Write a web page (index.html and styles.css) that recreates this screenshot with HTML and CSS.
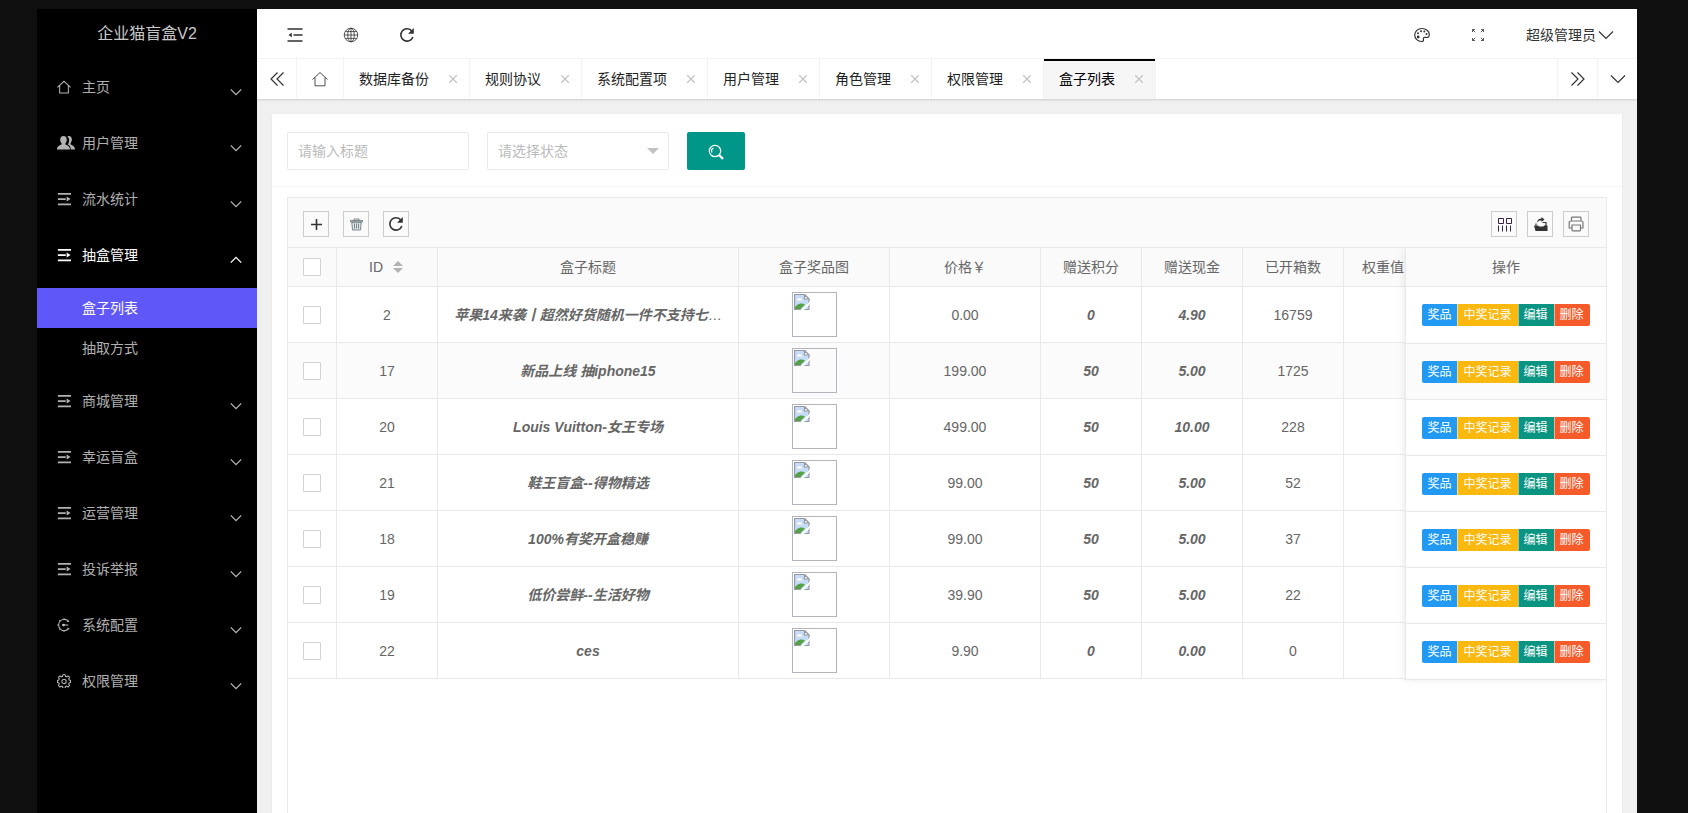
FILE: index.html
```html
<!DOCTYPE html>
<html lang="zh-CN">
<head>
<meta charset="UTF-8">
<meta name="viewport" content="width=device-width, initial-scale=1.0">
<title>盒子列表</title>
<link rel="stylesheet" href="styles.css">
</head>
<body>

<!-- 图标 -->
<svg class="sprite" aria-hidden="true">
<symbol id="i-home" viewBox="0 0 16 16"><path d="M.5 8.500 8 1.500l7.500 7M3 6.500v8.300h10V6.500"/></symbol>
<symbol id="i-user" viewBox="0 0 18 16"><path class="fill" d="M6.500 1c2.200 0 3.300 1.600 3.300 3.700 0 1.600-.6 2.800-1.400 3.600v1.300c2.400.9 4.600 1.900 4.600 4.900H0c0-3 2.200-4 4.600-4.900V8.300C3.800 7.500 3.200 6.300 3.200 4.700 3.200 2.600 4.300 1 6.500 1z"/><path class="fill" d="M10.300 1.500c.4-.3.900-.5 1.500-.5 2.100 0 3.100 1.600 3.100 3.600 0 1.600-.6 2.700-1.300 3.500v1.300c2.200.9 4.400 1.800 4.400 5.100h-4.200c0-2.700-1.300-4-3-4.900.8-1.300 1.300-2.900 1.300-4.700 0-1.300-.7-2.500-1.800-3.400z"/></symbol>
<symbol id="i-list" viewBox="0 0 16 16"><path stroke-width="2" d="M1 2h15M1 8h9M1 14h15"/><path class="fill" d="M11 5.200 15.500 8 11 10.800z"/></symbol>
<symbol id="i-conf" viewBox="0 0 16 16"><path d="M13.800 4.500A6.500 6.500 0 1 0 13.800 11.500M6 8h7M8 .2v2M8 13.800v2M.2 8h2M13 2.500l-1.500 1.600M2.600 2.600 4 4M2.600 13.400 4 12M13 13.500l-1.500-1.600"/><circle class="fill" cx="7.500" cy="8" r="1.500"/></symbol>
<symbol id="i-gear" viewBox="0 0 16 16"><path d="M6.700.8h2.600l.4 1.900 1.300.5 1.600-1.100 1.800 1.800-1 1.700.5 1.200 1.500.4v2.500l-1.500.4-.5 1.300 1 1.600-1.800 1.900-1.600-1.100-1.300.5-.4 1.900H6.700l-.4-1.900-1.300-.5-1.600 1.100L1.600 13l1-1.600-.5-1.300-1.500-.4V7.200l1.500-.4.5-1.200-1-1.700 1.800-1.800L5 3.200l1.300-.5z"/><circle cx="8" cy="8.500" r="2.500"/></symbol>
<symbol id="i-down" viewBox="0 0 16 16"><path d="M1 4.500 8 11.500l7-7"/></symbol>
<symbol id="i-up" viewBox="0 0 16 16"><path d="M1 11.500 8 4.500l7 7"/></symbol>
<symbol id="i-fold" viewBox="0 0 16 16"><path class="bold" d="M.5 2h15M6.500 8h9M.5 14h15"/><path class="fill" d="M1.500 8 4.800 5.800v4.400z"/></symbol>
<symbol id="i-globe" viewBox="0 0 16 16"><circle cx="8" cy="8" r="6.800"/><ellipse cx="8" cy="8" rx="3.300" ry="6.800"/><path d="M8 1v14M1 8h14M2.200 4.600h11.600M2.200 11.400h11.600"/></symbol>
<symbol id="i-refresh" viewBox="0 0 16 16"><path class="bold" d="M13 4.200A6.200 6.200 0 1 0 13.900 10"/><path class="fill" d="M14.800 1v5.800H9z"/></symbol>
<symbol id="i-skin" viewBox="0 0 16 16"><path d="M8 1.500c4 0 7.300 2.700 7.300 6 0 2.300-1.300 3.300-3.200 2.900-1.900-.4-3.100.3-2.700 1.900.3 1.300-.2 2.200-1.700 2.200C3.700 14.500.7 11.600.7 8S4 1.500 8 1.500z"/><circle class="fill" cx="4" cy="6.200" r="1"/><circle class="fill" cx="7" cy="4.200" r="1"/><circle class="fill" cx="10.300" cy="4.600" r="1"/><circle class="fill" cx="12.500" cy="7" r="1"/><circle class="fill" cx="4.200" cy="10" r="1.400"/></symbol>
<symbol id="i-full" viewBox="0 0 16 16"><path d="M5.200 5.200 2.500 2.500m0 2.500V2.500H5M10.800 5.200l2.700-2.700m-2.500 0h2.500V5M5.200 10.800l-2.700 2.700m0-2.500v2.500H5M10.800 10.800l2.700 2.700m-2.500 0h2.500V11"/></symbol>
<symbol id="i-left2" viewBox="0 0 16 16"><path d="M8.500 1.500 2 8l6.500 6.500M14.500 1.500 8 8l6.500 6.500"/></symbol>
<symbol id="i-right2" viewBox="0 0 16 16"><path d="M1.500 1.500 8 8l-6.500 6.500M7.500 1.500 14 8l-6.500 6.500"/></symbol>
<symbol id="i-close" viewBox="0 0 16 16"><path d="M3 3l10 10M13 3 3 13"/></symbol>
<symbol id="i-search" viewBox="0 0 16 16"><circle cx="7" cy="7" r="5.700"/><path d="M4 8.500A3.400 3.400 0 0 1 5.500 4"/><path stroke-width="2.400" d="M11.200 11.200 15 15"/></symbol>
<symbol id="i-plus" viewBox="0 0 16 16"><path class="bold" d="M8.500 3v11M3 8.500h11"/></symbol>
<symbol id="i-trash" viewBox="0 0 16 16"><path fill="#dfe6e8" d="M3.800 6h9.400l-.7 8H4.500z"/><path d="M2.500 4.500h12v1.500h-12zM6 4.300V3h5v1.300M6.500 7.500v5M8.500 7.500v5M10.500 7.500v5"/></symbol>
<symbol id="i-cols" viewBox="0 0 16 16"><path d="M2.500 2.500h5v5h-5zM10.500 2.500h5v5h-5zM2.500 9.500v6M6.500 9.500v6M10.500 9.500v6M14.500 9.500v6"/></symbol>
<symbol id="i-export" viewBox="0 0 16 16"><path class="fill" d="M2 9.500h4l1 1h4.500l.5-1h3.500V15h-12zM9.500 1l3 2.500-3 2.500V4.600C7.500 4.500 6 5 5 7c0-3 1.800-4.400 4.500-4.500z"/><path d="M10.500 6.500h3.500v3.500M4 9.500v-2"/></symbol>
<symbol id="i-print" viewBox="0 0 16 16"><path d="M3.500 5V2q0-.8.800-.8h7.900q.8 0 .8.800v3M3.500 12H1.200V7q0-2 2-2h9.800q2 0 2 2v5h-2.300M4 9h8.500v5q0 .8-.8.800H4.800q-.8 0-.8-.8z"/></symbol>
<symbol id="i-broken" viewBox="0 0 16 16"><path fill="#c6dbf5" stroke="#9a9aa6" d="M.5.500h10l4.500 4.500v10.500H.5z"/><path fill="#fff" stroke="#9a9aa6" d="M10.500.5V5H15z"/><path fill="#fff" d="M2.500 6.500q.3-2 2-2 .8-1.300 2-.3 1.500.3 1.500 2.300z"/><path fill="#54a147" d="M1 15v-2q3-4 6-3.500 2.500 0 4 1l-4.500 4.500z"/><path fill="#fff" d="M16 7.500V10l-6 6H6.500z"/></symbol>
</svg>

<div class="layout">

<nav class="side">
<div class="logo">企业猫盲盒V2</div>
<ul class="menu">
<li><a href="#"><svg class="icon"><use href="#i-home"/></svg>主页<svg class="arrow"><use href="#i-down"/></svg></a></li>
<li><a href="#"><svg class="icon icon-user"><use href="#i-user"/></svg>用户管理<svg class="arrow"><use href="#i-down"/></svg></a></li>
<li><a href="#"><svg class="icon"><use href="#i-list"/></svg>流水统计<svg class="arrow"><use href="#i-down"/></svg></a></li>
<li class="open"><a href="#"><svg class="icon"><use href="#i-list"/></svg>抽盒管理<svg class="arrow"><use href="#i-up"/></svg></a>
<ul class="submenu">
<li><a class="this" href="#">盒子列表</a></li>
<li><a href="#">抽取方式</a></li>
</ul>
</li>
<li><a href="#"><svg class="icon"><use href="#i-list"/></svg>商城管理<svg class="arrow"><use href="#i-down"/></svg></a></li>
<li><a href="#"><svg class="icon"><use href="#i-list"/></svg>幸运盲盒<svg class="arrow"><use href="#i-down"/></svg></a></li>
<li><a href="#"><svg class="icon"><use href="#i-list"/></svg>运营管理<svg class="arrow"><use href="#i-down"/></svg></a></li>
<li><a href="#"><svg class="icon"><use href="#i-list"/></svg>投诉举报<svg class="arrow"><use href="#i-down"/></svg></a></li>
<li><a href="#"><svg class="icon"><use href="#i-conf"/></svg>系统配置<svg class="arrow"><use href="#i-down"/></svg></a></li>
<li><a href="#"><svg class="icon"><use href="#i-gear"/></svg>权限管理<svg class="arrow"><use href="#i-down"/></svg></a></li>
</ul>
</nav>

<div class="main">
<header class="header">
<button class="head-btn" aria-label="侧边伸缩"><svg><use href="#i-fold"/></svg></button>
<button class="head-btn" aria-label="前台"><svg class="thin"><use href="#i-globe"/></svg></button>
<button class="head-btn" aria-label="刷新"><svg><use href="#i-refresh"/></svg></button>
<span class="space"></span>
<button class="head-btn" aria-label="主题"><svg><use href="#i-skin"/></svg></button>
<button class="head-btn" aria-label="全屏"><svg class="thin"><use href="#i-full"/></svg></button>
<button class="head-user">超级管理员<svg><use href="#i-down"/></svg></button>
</header>

<div class="tabs">
<button class="tab-ctrl tab-prev" aria-label="向左"><svg><use href="#i-left2"/></svg></button>
<div class="tab tab-home"><a href="#" aria-label="主页"><svg class="thin"><use href="#i-home"/></svg></a></div>
<div class="tab"><a href="#">数据库备份</a><button aria-label="关闭"><svg><use href="#i-close"/></svg></button></div>
<div class="tab"><a href="#">规则协议</a><button aria-label="关闭"><svg><use href="#i-close"/></svg></button></div>
<div class="tab"><a href="#">系统配置项</a><button aria-label="关闭"><svg><use href="#i-close"/></svg></button></div>
<div class="tab"><a href="#">用户管理</a><button aria-label="关闭"><svg><use href="#i-close"/></svg></button></div>
<div class="tab"><a href="#">角色管理</a><button aria-label="关闭"><svg><use href="#i-close"/></svg></button></div>
<div class="tab"><a href="#">权限管理</a><button aria-label="关闭"><svg><use href="#i-close"/></svg></button></div>
<div class="tab tab-this"><a href="#">盒子列表</a><button aria-label="关闭"><svg><use href="#i-close"/></svg></button></div>
<span class="space"></span>
<button class="tab-ctrl" aria-label="向右"><svg><use href="#i-right2"/></svg></button>
<button class="tab-ctrl" aria-label="更多"><svg><use href="#i-down"/></svg></button>
</div>

<div class="content">
<div class="card">
<form class="search">
<input class="field" type="text" placeholder="请输入标题" aria-label="标题">
<div class="select">
<select class="field" aria-label="状态"><option>请选择状态</option></select>
</div>
<button class="search-btn" type="button" aria-label="搜索"><svg><use href="#i-search"/></svg></button>
</form>

<div class="table-view">
<div class="toolbar">
<div class="tools">
<button aria-label="添加"><svg><use href="#i-plus"/></svg></button>
<button aria-label="删除"><svg class="thin trash"><use href="#i-trash"/></svg></button>
<button aria-label="刷新"><svg><use href="#i-refresh"/></svg></button>
</div>
<div class="tools tools-right">
<button aria-label="筛选列"><svg class="cols"><use href="#i-cols"/></svg></button>
<button aria-label="导出"><svg><use href="#i-export"/></svg></button>
<button aria-label="打印"><svg class="print"><use href="#i-print"/></svg></button>
</div>
</div>

<div class="table-box">
<table class="table">
<colgroup><col class="w-check"><col class="w-s"><col class="w-l"><col class="w-m"><col class="w-m"><col class="w-s"><col class="w-s"><col class="w-s"><col class="w-s"></colgroup>
<thead>
<tr><th><input type="checkbox" aria-label="全选"></th><th>ID<span class="sort"></span></th><th>盒子标题</th><th>盒子奖品图</th><th>价格￥</th><th>赠送积分</th><th>赠送现金</th><th>已开箱数</th><th>权重值<span class="sort"></span></th></tr>
</thead>
<tbody>
<tr><td><input type="checkbox" aria-label="选择 2"></td><td>2</td><td><b>苹果14来袭丨超然好货随机一件不支持七</b>…</td><td><span class="pic"><svg><use href="#i-broken"/></svg></span></td><td>0.00</td><td><b>0</b></td><td><b>4.90</b></td><td>16759</td><td></td></tr>
<tr class="hover"><td><input type="checkbox" aria-label="选择 17"></td><td>17</td><td><b>新品上线 抽iphone15</b></td><td><span class="pic"><svg><use href="#i-broken"/></svg></span></td><td>199.00</td><td><b>50</b></td><td><b>5.00</b></td><td>1725</td><td></td></tr>
<tr><td><input type="checkbox" aria-label="选择 20"></td><td>20</td><td><b>Louis Vuitton-女王专场</b></td><td><span class="pic"><svg><use href="#i-broken"/></svg></span></td><td>499.00</td><td><b>50</b></td><td><b>10.00</b></td><td>228</td><td></td></tr>
<tr><td><input type="checkbox" aria-label="选择 21"></td><td>21</td><td><b>鞋王盲盒--得物精选</b></td><td><span class="pic"><svg><use href="#i-broken"/></svg></span></td><td>99.00</td><td><b>50</b></td><td><b>5.00</b></td><td>52</td><td></td></tr>
<tr><td><input type="checkbox" aria-label="选择 18"></td><td>18</td><td><b>100%有奖开盒稳赚</b></td><td><span class="pic"><svg><use href="#i-broken"/></svg></span></td><td>99.00</td><td><b>50</b></td><td><b>5.00</b></td><td>37</td><td></td></tr>
<tr><td><input type="checkbox" aria-label="选择 19"></td><td>19</td><td><b>低价尝鲜--生活好物</b></td><td><span class="pic"><svg><use href="#i-broken"/></svg></span></td><td>39.90</td><td><b>50</b></td><td><b>5.00</b></td><td>22</td><td></td></tr>
<tr><td><input type="checkbox" aria-label="选择 22"></td><td>22</td><td><b>ces</b></td><td><span class="pic"><svg><use href="#i-broken"/></svg></span></td><td>9.90</td><td><b>0</b></td><td><b>0.00</b></td><td>0</td><td></td></tr>
</tbody>
</table>

<!-- 固定在右侧的操作列 -->
<table class="table table-fixed">
<thead><tr><th>操作</th></tr></thead>
<tbody>
<tr><td><div class="btns"><button class="blue">奖品</button><button class="yellow">中奖记录</button><button class="green">编辑</button><button class="red">删除</button></div></td></tr>
<tr class="hover"><td><div class="btns"><button class="blue">奖品</button><button class="yellow">中奖记录</button><button class="green">编辑</button><button class="red">删除</button></div></td></tr>
<tr><td><div class="btns"><button class="blue">奖品</button><button class="yellow">中奖记录</button><button class="green">编辑</button><button class="red">删除</button></div></td></tr>
<tr><td><div class="btns"><button class="blue">奖品</button><button class="yellow">中奖记录</button><button class="green">编辑</button><button class="red">删除</button></div></td></tr>
<tr><td><div class="btns"><button class="blue">奖品</button><button class="yellow">中奖记录</button><button class="green">编辑</button><button class="red">删除</button></div></td></tr>
<tr><td><div class="btns"><button class="blue">奖品</button><button class="yellow">中奖记录</button><button class="green">编辑</button><button class="red">删除</button></div></td></tr>
<tr><td><div class="btns"><button class="blue">奖品</button><button class="yellow">中奖记录</button><button class="green">编辑</button><button class="red">删除</button></div></td></tr>
</tbody>
</table>
</div>
</div>
</div>
</div>
</div>
</div>

</body>
</html>
```
FILE: styles.css
```css
* {
  box-sizing: border-box;
}
body {
  margin: 0;
  height: 100vh;
  padding: 9px 51px 0 37px;
  overflow: hidden;
  background: #0f0f0f;
  color: #333;
  font: 14px/20px "Liberation Sans", "Noto Sans CJK SC", sans-serif;
}
a {
  color: inherit;
  text-decoration: none;
}
ul {
  margin: 0;
  padding: 0;
  list-style: none;
}
button {
  margin: 0;
  padding: 0;
  border: 0;
  background: none;
  color: inherit;
  font: inherit;
  cursor: pointer;
}
svg {
  width: 16px;
  height: 16px;
  flex: none;
  fill: none;
  stroke: currentColor;
  stroke-width: 1.2;
}
.sprite {
  position: absolute;
  width: 0;
  height: 0;
}
.fill {
  fill: currentColor;
  stroke: none;
}
.bold {
  stroke-width: 1.6;
}
.thin {
  stroke-width: 0.8;
}
.space {
  flex: 1;
}
.layout {
  display: flex;
  height: 100%;
}

/* 左侧菜单 */
.side {
  flex: none;
  width: 220px;
  background: #000;
  color: rgba(255, 255, 255, 0.7);
}
.logo {
  height: 50px;
  line-height: 50px;
  text-align: center;
  font-size: 16px;
  color: rgba(255, 255, 255, 0.8);
}
.menu > li > a {
  display: flex;
  align-items: center;
  height: 56px;
  padding: 0 15px 0 20px;
}
.menu .icon {
  width: 14px;
  height: 14px;
  margin-right: 11px;
}
.menu .icon-user {
  width: 18px;
  height: 16px;
  margin-right: 7px;
}
.menu .arrow {
  width: 12px;
  height: 12px;
  margin: 10px 0 0 auto;
  stroke-width: 1.8;
}
.menu .open > a {
  color: #fff;
}
.submenu {
  padding: 5px 0;
}
.submenu a {
  display: block;
  height: 40px;
  padding-left: 45px;
  line-height: 40px;
}
.submenu .this {
  background: #5f57f7;
  color: #fff;
}

/* 顶部 */
.main {
  flex: 1;
  min-width: 0;
  display: flex;
  flex-direction: column;
  background: #f0f0f0;
}
.header {
  display: flex;
  height: 50px;
  padding: 2px 23px 0 10px;
  border-bottom: 1px solid #f6f6f6;
  background: #fff;
}
.head-btn {
  display: flex;
  align-items: center;
  justify-content: center;
  width: 56px;
}
.head-user {
  display: flex;
  align-items: center;
  gap: 2px;
  padding-left: 20px;
}
.tabs {
  display: flex;
  height: 40px;
  background: #fff;
  box-shadow: 0 1px 2px rgba(0, 0, 0, 0.15);
}
.tab-ctrl {
  display: flex;
  align-items: center;
  justify-content: center;
  width: 40px;
  border-left: 1px solid #f3f3f3;
}
.tab-prev {
  border-left: 0;
  border-right: 1px solid #f3f3f3;
}
.tab {
  display: flex;
  align-items: center;
  padding: 0 9px 0 15px;
  border-right: 1px solid #f3f3f3;
  color: #222;
}
.tab button {
  display: flex;
  margin-left: 17px;
  padding: 1px;
  color: #c2c2c2;
}
.tab button svg {
  width: 12px;
  height: 12px;
  stroke-width: 1.6;
}
.tab-home {
  padding: 0 15px;
}
.tab-home a {
  display: flex;
}
.tab-this {
  background: #f6f6f6;
  box-shadow: inset 0 2px #000;
  color: #000;
}

/* 内容 */
.content {
  flex: 1;
  min-height: 0;
  padding: 15px 15px 0;
  display: flex;
}
.card {
  flex: 1;
  min-width: 0;
  display: flex;
  flex-direction: column;
  background: #fff;
  box-shadow: 0 1px 2px rgba(0, 0, 0, 0.05);
}
.search {
  display: flex;
  gap: 18px;
  height: 73px;
  padding: 18px 15px 0;
  border-bottom: 1px solid #f6f6f6;
}
.field {
  width: 182px;
  height: 38px;
  padding: 0 10px;
  border: 1px solid #eaeaea;
  border-radius: 2px;
  background: #fff;
  color: #bbb;
  font: inherit;
  appearance: none;
}
.field::placeholder {
  color: #bbb;
}
.select {
  position: relative;
  height: 38px;
}
.select::after {
  content: "";
  position: absolute;
  top: 16px;
  right: 10px;
  border: 6px solid transparent;
  border-top-color: #c2c2c2;
  border-bottom: 0;
  pointer-events: none;
}
.search-btn {
  display: flex;
  align-items: center;
  justify-content: center;
  width: 58px;
  height: 38px;
  padding-top: 2px;
  border-radius: 2px;
  background: #009688;
  color: #fff;
}

/* 表格 */
.table-view {
  flex: 1;
  min-height: 0;
  margin: 10px 15px 0;
  border: 1px solid #e9e9e9;
  border-bottom: 0;
  display: flex;
  flex-direction: column;
}
.toolbar {
  display: flex;
  justify-content: space-between;
  align-items: center;
  height: 50px;
  flex: none;
  padding: 3px 17px 0 15px;
  border-bottom: 1px solid #e9e9e9;
  background: #fafafa;
}
.tools {
  display: flex;
  gap: 14px;
}
.tools-right {
  gap: 10px;
}
.tools button {
  display: flex;
  align-items: center;
  justify-content: center;
  width: 26px;
  height: 26px;
  border: 1px solid #ccc;
}
.trash {
  color: #5d6d70;
}
.cols {
  stroke-width: 1;
  color: #3a2540;
}
.print {
  color: #777;
}
.table-box {
  position: relative;
  flex: 1;
  min-height: 0;
  overflow: hidden;
}
.table {
  width: 1157px;
  table-layout: fixed;
  border-collapse: separate;
  border-spacing: 0;
  background: #fff;
  color: #666;
  text-align: center;
}
.w-check {
  width: 49px;
}
.w-s {
  width: 101px;
}
.w-m {
  width: 151px;
}
.w-l {
  width: 301px;
}
.table th,
.table td {
  height: 56px;
  padding: 0;
  border: solid #e9e9e9;
  border-width: 0 1px 1px 0;
  font-weight: 400;
  white-space: nowrap;
}
.table th {
  height: 39px;
  background: #fafafa;
}
.table .hover td {
  background: #fbfbfb;
}
.table b {
  font-style: italic;
}
.table input {
  display: block;
  width: 18px;
  height: 18px;
  margin: 0 auto;
  border: 1px solid #d2d2d2;
  border-radius: 1px;
  background: #fff;
  appearance: none;
}
.sort {
  display: inline-block;
  width: 10px;
  height: 12px;
  margin: 0 2px 0 10px;
  vertical-align: -1px;
}
.sort::before,
.sort::after {
  content: "";
  display: block;
  border: 5px solid transparent;
  border-top: 0;
  border-bottom-color: #b2b2b2;
}
.sort::after {
  margin-top: 2px;
  border-top: 5px solid #b2b2b2;
  border-bottom: 0;
}
.pic {
  display: flex;
  width: 45px;
  height: 45px;
  margin: 0 auto;
  padding: 1px;
  border: 1px solid #b4b4bc;
}
.pic svg {
  stroke: none;
}
.table-fixed {
  position: absolute;
  top: 0;
  right: 0;
  width: 201px;
  border-left: 1px solid #e9e9e9;
  box-shadow: -1px 0 8px rgba(0, 0, 0, 0.08);
}
.table-fixed th,
.table-fixed td {
  border-right: 0;
}
.table-fixed tr:first-child td {
  height: 57px;
}
.btns {
  display: flex;
  justify-content: center;
}
.btns button {
  height: 22px;
  padding: 0 6px 0 5px;
  border-left: 1px solid rgba(255, 255, 255, 0.5);
  color: #fff;
  font-size: 12px;
  line-height: 22px;
}
.btns button:first-child {
  padding-left: 5px;
  border-left: 0;
  border-radius: 2px 0 0 2px;
}
.btns button:last-child {
  border-radius: 0 2px 2px 0;
}
.btns .blue {
  background: #2299f2;
}
.btns .yellow {
  background: #fbb80f;
}
.btns .green {
  background: #0c9482;
}
.btns .red {
  background: #f55a2a;
}
```
